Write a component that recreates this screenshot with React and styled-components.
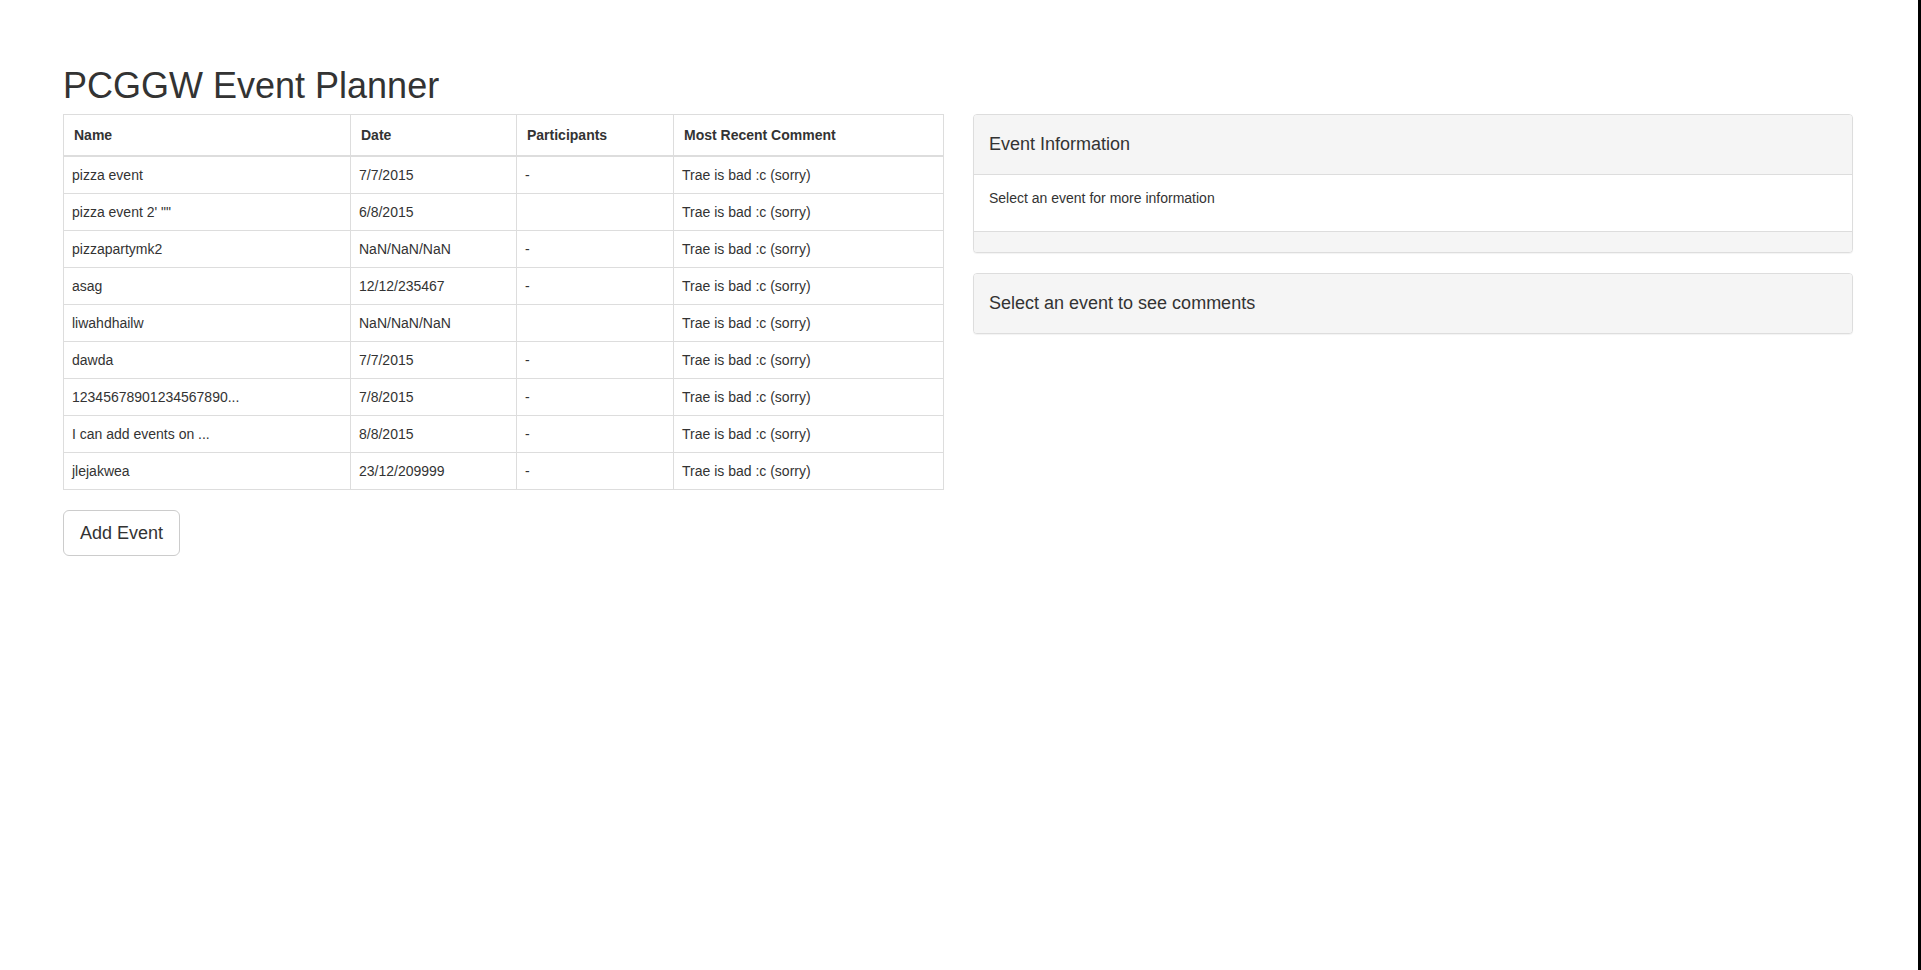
import React from 'react';
import styled, { createGlobalStyle } from 'styled-components';

const events = [
  { name: 'pizza event', date: '7/7/2015', participants: '-' },
  { name: 'pizza event 2\' ""', date: '6/8/2015', participants: '' },
  { name: 'pizzapartymk2', date: 'NaN/NaN/NaN', participants: '-' },
  { name: 'asag', date: '12/12/235467', participants: '-' },
  { name: 'liwahdhailw', date: 'NaN/NaN/NaN', participants: '' },
  { name: 'dawda', date: '7/7/2015', participants: '-' },
  { name: '12345678901234567890...', date: '7/8/2015', participants: '-' },
  { name: 'I can add events on ...', date: '8/8/2015', participants: '-' },
  { name: 'jlejakwea', date: '23/12/209999', participants: '-' },
];

function App() {
  return (
    <>
      <GlobalStyle />
      <Page>
        <Title>PCGGW Event Planner</Title>
        <Columns>
          <LeftColumn>
            <EventTable>
              <colgroup>
                <col style={{ width: 287 }} />
                <col style={{ width: 166 }} />
                <col style={{ width: 157 }} />
                <col style={{ width: 270 }} />
              </colgroup>
              <thead>
                <tr>
                  <HeadCell>Name</HeadCell>
                  <HeadCell>Date</HeadCell>
                  <HeadCell>Participants</HeadCell>
                  <HeadCell>Most Recent Comment</HeadCell>
                </tr>
              </thead>
              <tbody>
                {events.map((ev, i) => (
                  <tr key={i}>
                    <Cell>{ev.name}</Cell>
                    <Cell>{ev.date}</Cell>
                    <Cell>{ev.participants}</Cell>
                    <Cell>Trae is bad :c (sorry)</Cell>
                  </tr>
                ))}
              </tbody>
            </EventTable>
            <AddButton type="button">Add Event</AddButton>
          </LeftColumn>
          <RightColumn>
            <Panel>
              <PanelHeading divided>Event Information</PanelHeading>
              <PanelBody>Select an event for more information</PanelBody>
              <PanelFooter />
            </Panel>
            <Panel>
              <PanelHeading>Select an event to see comments</PanelHeading>
            </Panel>
          </RightColumn>
        </Columns>
      </Page>
    </>
  );
}

const GlobalStyle = createGlobalStyle`
  html, body {
    margin: 0;
    padding: 0;
    background: #000;
  }
  body {
    font-family: "Liberation Sans", Arial, Helvetica, sans-serif;
    font-size: 14px;
    line-height: 20px;
    color: #333;
  }
  * {
    box-sizing: border-box;
  }
`;

const Page = styled.div`
  min-height: 100vh;
  margin-right: 3px;
  background: #fff;
  padding: 66px 0 0 63px;
`;

const Title = styled.h1`
  margin: 0 0 8px;
  font-size: 36px;
  font-weight: 400;
  line-height: 39.6px;
  color: #333;
`;

const Columns = styled.div`
  display: flex;
  gap: 30px;
  align-items: flex-start;
`;

const LeftColumn = styled.div`
  width: 880px;
  display: flex;
  flex-direction: column;
  align-items: flex-start;
`;

const RightColumn = styled.div`
  width: 880px;
  display: flex;
  flex-direction: column;
  gap: 20px;
`;

const EventTable = styled.table`
  width: 880px;
  table-layout: fixed;
  border-collapse: collapse;
  border: 1px solid #ddd;
  margin-bottom: 20px;
`;

const HeadCell = styled.th`
  text-align: left;
  font-weight: 700;
  padding: 10px 10px;
  line-height: 20px;
  border: 1px solid #ddd;
  border-bottom: 2px solid #ddd;
  white-space: nowrap;
`;

const Cell = styled.td`
  padding: 8px;
  line-height: 20px;
  border: 1px solid #ddd;
  white-space: nowrap;
  overflow: hidden;
`;

const AddButton = styled.button`
  font-family: inherit;
  font-size: 18px;
  line-height: 24px;
  padding: 10px 16px;
  color: #333;
  background: #fff;
  border: 1px solid #ccc;
  border-radius: 6px;
  cursor: pointer;
`;

const Panel = styled.div`
  border: 1px solid #ddd;
  border-radius: 4px;
  background: #fff;
  box-shadow: 0 1px 1px rgba(0, 0, 0, 0.05);
  overflow: hidden;
`;

const PanelHeading = styled.div`
  background: #f5f5f5;
  padding: 19px 15px;
  font-size: 18px;
  line-height: 21px;
  color: #333;
  border-bottom: ${(p) => (p.divided ? '1px solid #ddd' : 'none')};
`;

const PanelBody = styled.div`
  padding: 13px 15px 23px;
  font-size: 14px;
  line-height: 20px;
`;

const PanelFooter = styled.div`
  height: 21px;
  background: #f5f5f5;
  border-top: 1px solid #ddd;
`;

export default App;
